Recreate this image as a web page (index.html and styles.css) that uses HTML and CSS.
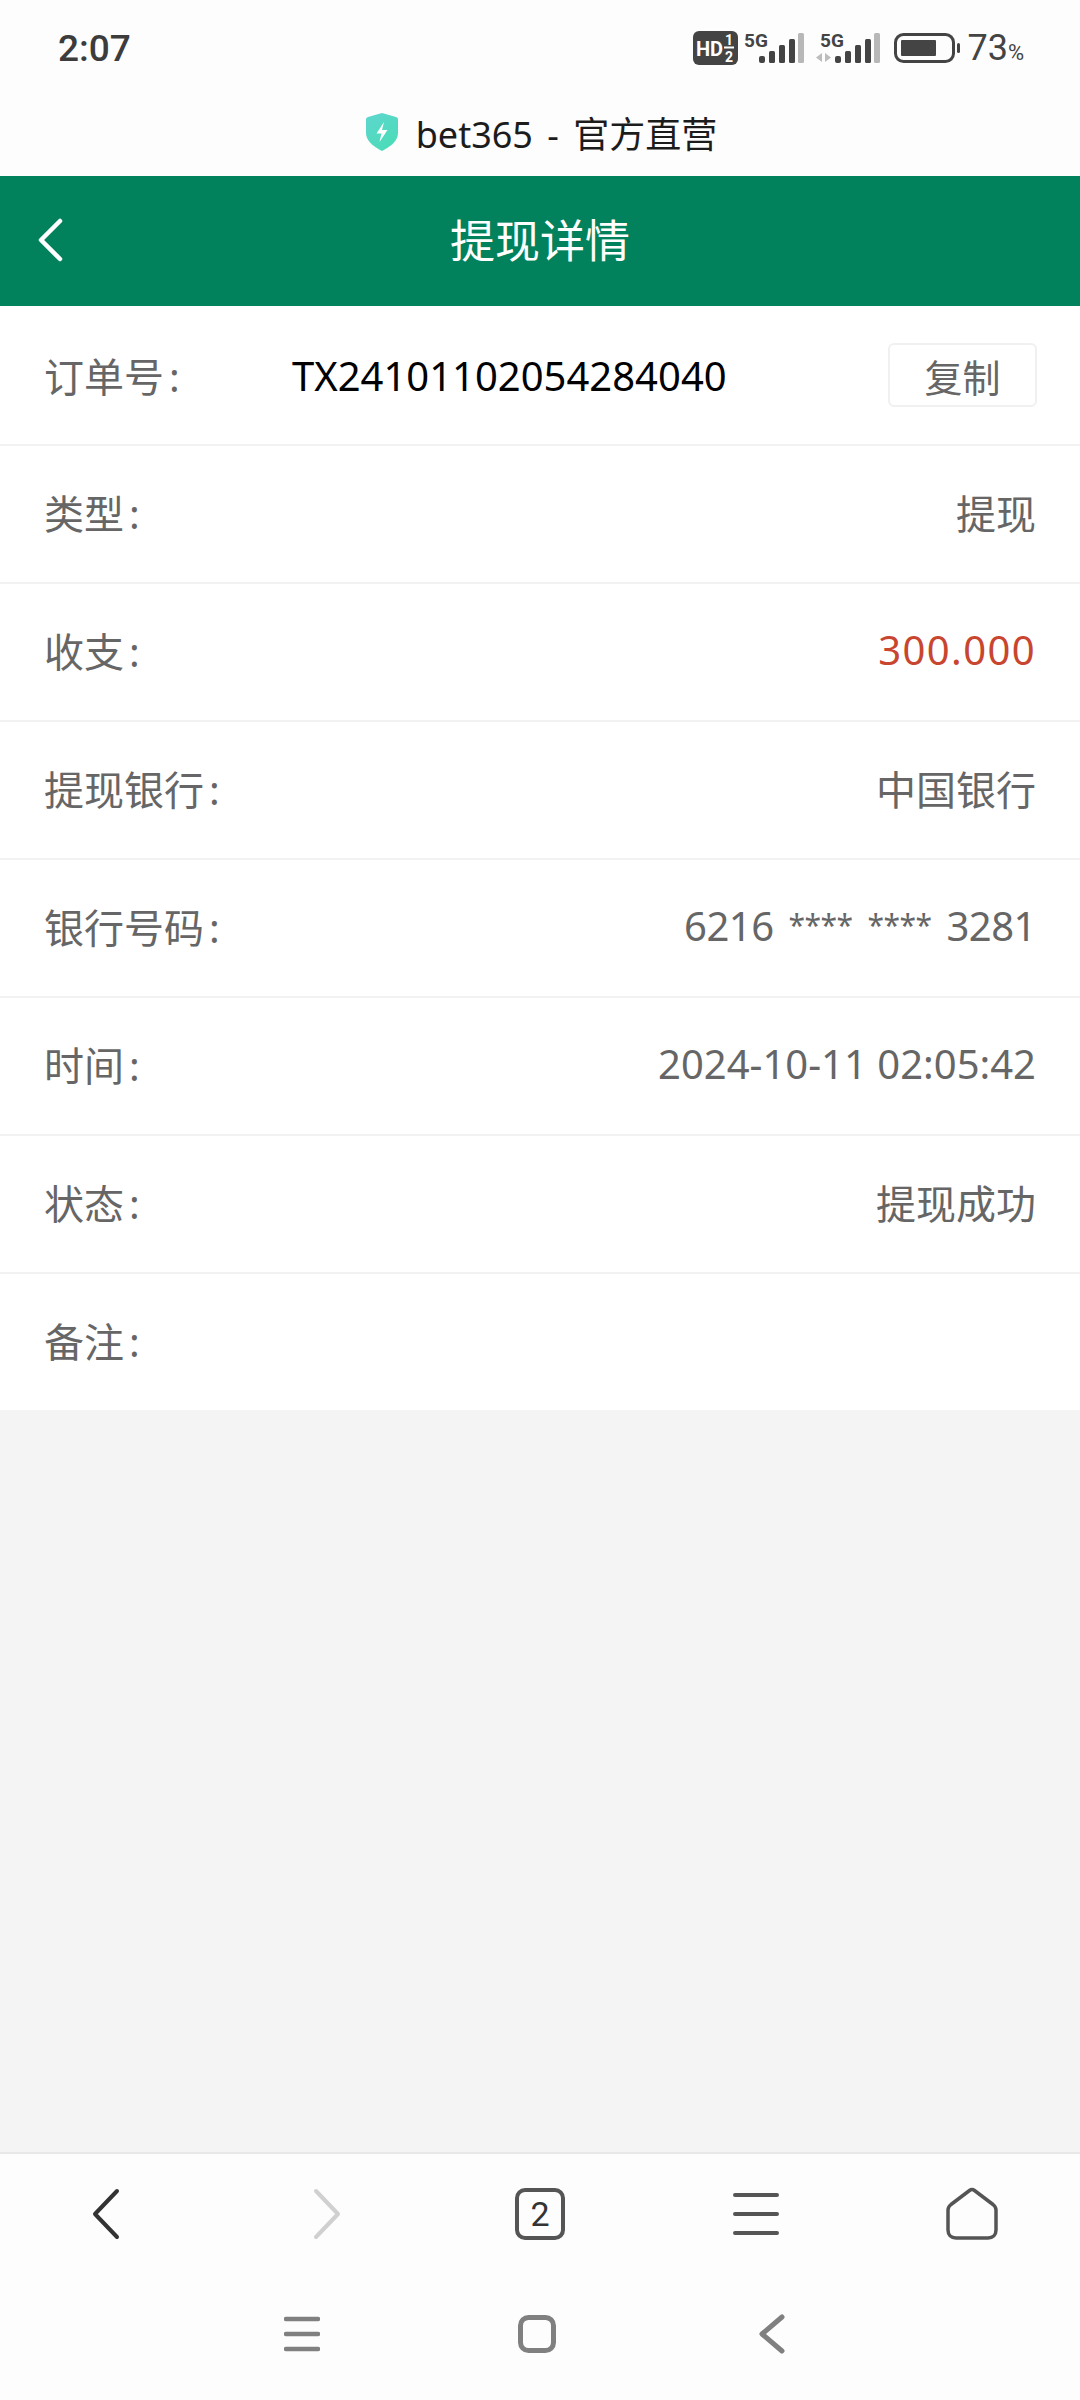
FILE: index.html
```html
<!DOCTYPE html>
<html lang="zh-CN">
<head>
    <meta charset="UTF-8">
    <meta name="viewport" content="width=device-width, initial-scale=1.0">
    <title>提现详情</title>
    <link rel="stylesheet" href="styles.css">
</head>
<body>
    <div class="phone">
        <div class="status-bar">
            <span class="clock">2:07</span>
            <div class="status-icons">
                <svg class="hd-icon" width="45" height="34" viewBox="0 0 45 34">
                    <rect width="45" height="34" rx="6" fill="#444"/>
                    <text x="3" y="25" class="hd-text">HD</text>
                    <text x="32" y="14" class="hd-frac">1</text>
                    <rect x="31" y="15.500" width="10" height="2" fill="#fff"/>
                    <text x="32" y="31" class="hd-frac">2</text>
                </svg>
                <svg class="signal signal-one" width="60" height="36" viewBox="0 0 60 36">
                    <text x="0" y="20" class="net-text">5G</text>
                    <rect x="15" y="29" width="6" height="7" rx="2" fill="#444"/>
                    <rect x="25" y="24" width="6" height="12" rx="1.500" fill="#444"/>
                    <rect x="35" y="18" width="6" height="18" rx="1.500" fill="#444"/>
                    <rect x="45" y="12" width="6" height="24" rx="1.500" fill="#444"/>
                    <rect x="54" y="6" width="6" height="30" rx="1.500" fill="#b8b8b8"/>
                </svg>
                <svg class="signal signal-two" width="64" height="36" viewBox="0 0 64 36">
                    <text x="4" y="20" class="net-text">5G</text>
                    <path d="M6 26v9l-6-4.500zM9 26v9l6-4.500z" fill="#bdbdbd"/>
                    <rect x="19" y="29" width="6" height="7" rx="2" fill="#444"/>
                    <rect x="29" y="24" width="6" height="12" rx="1.500" fill="#444"/>
                    <rect x="39" y="18" width="6" height="18" rx="1.500" fill="#444"/>
                    <rect x="49" y="12" width="6" height="24" rx="1.500" fill="#444"/>
                    <rect x="58" y="6" width="6" height="30" rx="1.500" fill="#b8b8b8"/>
                </svg>
                <svg class="battery" width="66" height="30" viewBox="0 0 66 30">
                    <rect x="1.500" y="1.500" width="58" height="27" rx="8" fill="none" stroke="#444" stroke-width="3"/>
                    <rect x="7" y="7" width="35" height="16" rx="1" fill="#444"/>
                    <rect x="63" y="10" width="3" height="10" rx="1.500" fill="#444"/>
                </svg>
                <span class="battery-level">73<small>%</small></span>
            </div>
        </div>

        <div class="address-bar">
            <svg class="shield" width="32" height="38" viewBox="0 0 32 38">
                <defs>
                    <linearGradient id="shieldFill" x1="0" y1="0" x2="0.6" y2="1">
                        <stop offset="0" stop-color="#5fd6cf"/>
                        <stop offset="1" stop-color="#4bdcb8"/>
                    </linearGradient>
                </defs>
                <path d="M16 0l14 4c1.200.4 2 1.200 2 2.500V20c0 7-6 13-16 18C6 33 0 27 0 20V6.500C0 5.200.8 4.400 2 4z" fill="url(#shieldFill)"/>
                <path d="M18 9l-7.500 11.500h5L13.500 29 21.500 17h-5.500z" fill="#fff"/>
            </svg>
            <span class="site-name">bet365 - 官方直营</span>
        </div>

        <header class="title-bar">
            <svg class="title-back" width="28" height="44" viewBox="0 0 28 44">
                <path d="M24 3L5 22l19 19" fill="none" stroke="#fff" stroke-width="4.500" stroke-linecap="round" stroke-linejoin="round"/>
            </svg>
            <h1>提现详情</h1>
        </header>

        <main class="details">
            <div class="row row-first">
                <span class="label label-order">订单号<i>:</i></span>
                <span class="order-no">TX24101102054284040</span>
                <button class="copy-btn">复制</button>
            </div>
            <div class="row">
                <span class="label">类型<i>:</i></span>
                <span class="value">提现</span>
            </div>
            <div class="row">
                <span class="label">收支<i>:</i></span>
                <span class="value value-amount">300.000</span>
            </div>
            <div class="row">
                <span class="label">提现银行<i>:</i></span>
                <span class="value">中国银行</span>
            </div>
            <div class="row">
                <span class="label">银行号码<i>:</i></span>
                <span class="value value-card">6216 <em>****</em> <em>****</em> 3281</span>
            </div>
            <div class="row">
                <span class="label">时间<i>:</i></span>
                <span class="value">2024-10-11 02:05:42</span>
            </div>
            <div class="row">
                <span class="label">状态<i>:</i></span>
                <span class="value">提现成功</span>
            </div>
            <div class="row row-last">
                <span class="label">备注<i>:</i></span>
            </div>
        </main>

        <div class="spacer"></div>

        <nav class="browser-nav">
            <svg class="nav-back" width="30" height="52" viewBox="0 0 30 52">
                <path d="M26 3L4 26l22 23" fill="none" stroke="#333" stroke-width="4" stroke-linecap="round" stroke-linejoin="round"/>
            </svg>
            <svg class="nav-forward" width="30" height="52" viewBox="0 0 30 52">
                <path d="M4 3l22 23L4 49" fill="none" stroke="#d0d0d0" stroke-width="4" stroke-linecap="round" stroke-linejoin="round"/>
            </svg>
            <div class="tab-count">2</div>
            <svg width="46" height="44" viewBox="0 0 46 44">
                <path d="M2 3h42M2 22h42M2 41h42" fill="none" stroke="#555" stroke-width="4" stroke-linecap="round"/>
            </svg>
            <svg width="52" height="54" viewBox="0 0 52 54">
                <path d="M23.500 3.500L5 17.500c-1.500 1.200-3 3-3 5.500v20c0 5 3 8 8 8h32c5 0 8-3 8-8V23c0-2.500-1.500-4.300-3-5.500L28.500 3.500c-1.700-1.300-3.300-1.300-5 0z" fill="none" stroke="#555" stroke-width="3.500" stroke-linejoin="round"/>
            </svg>
        </nav>

        <nav class="system-nav">
            <svg width="36" height="36" viewBox="0 0 36 36">
                <path d="M2 3h32M2 18h32M2 33h32" fill="none" stroke="#808080" stroke-width="4.500" stroke-linecap="round"/>
            </svg>
            <svg width="38" height="38" viewBox="0 0 38 38">
                <rect x="2.500" y="2.500" width="33" height="33" rx="8" fill="none" stroke="#808080" stroke-width="5"/>
            </svg>
            <svg width="26" height="40" viewBox="0 0 26 40">
                <path d="M23 3L3 20l20 17" fill="none" stroke="#808080" stroke-width="5" stroke-linecap="round" stroke-linejoin="round"/>
            </svg>
        </nav>
    </div>
</body>
</html>
```

FILE: styles.css
```css
* {
    box-sizing: border-box;
}
body {
    margin: 0;
    font-family: "Noto Sans", "Noto Sans CJK SC", sans-serif;
    background-color: #f4f4f4;
}
.phone {
    width: 1080px;
    height: 2400px;
    display: flex;
    flex-direction: column;
    overflow: hidden;
}

/* status bar */
.status-bar {
    height: 88px;
    padding: 8px 56px 0 58px;
    display: flex;
    align-items: center;
    justify-content: space-between;
    background-color: #fdfdfd;
}
.clock {
    font-family: Roboto, sans-serif;
    font-size: 37px;
    font-weight: 500;
    color: #3c3c3c;
}
.status-icons {
    display: flex;
    align-items: center;
}
.signal {
    margin-bottom: 6px;
}
.signal-one {
    margin-left: 6px;
}
.signal-two {
    margin-left: 12px;
}
.battery {
    margin-left: 14px;
}
.hd-text {
    font-family: Roboto, sans-serif;
    font-size: 20px;
    font-weight: 700;
    fill: #fff;
}
.hd-frac {
    font-family: Roboto, sans-serif;
    font-size: 14px;
    font-weight: 700;
    fill: #fff;
}
.net-text {
    font-family: Roboto, sans-serif;
    font-size: 19px;
    font-weight: 700;
    fill: #444;
}
.battery-level {
    margin-left: 7px;
    font-family: Roboto, sans-serif;
    font-size: 36px;
    color: #444;
}
.battery-level small {
    font-size: 22px;
}

/* address bar */
.address-bar {
    height: 88px;
    display: flex;
    align-items: center;
    justify-content: center;
    gap: 18px;
    background-color: #fdfdfd;
    padding-left: 3px;
}
.site-name {
    font-size: 36px;
    word-spacing: 5px;
    color: #1c1c1c;
}

/* green title bar */
.title-bar {
    height: 130px;
    padding-bottom: 6px;
    position: relative;
    display: flex;
    align-items: center;
    justify-content: center;
    background-color: #02825c;
}
.title-bar h1 {
    margin: 0;
    font-size: 45px;
    font-weight: 400;
    color: #fff;
}
.title-back {
    position: absolute;
    left: 36px;
    top: 42px;
}

/* detail rows */
.details {
    background-color: #fff;
}
.row {
    height: 138px;
    padding: 0 44px 5px;
    display: flex;
    align-items: center;
    justify-content: space-between;
    border-bottom: 2px solid #f2f2f2;
}
.row-first {
    height: 140px;
    padding-bottom: 0;
}
.row-last {
    height: 136px;
    border-bottom: none;
}
.label {
    font-size: 40px;
    color: #666;
}
.label i {
    margin-left: 5px;
    font-style: normal;
}
.label-order {
    width: 248px;
    flex-shrink: 0;
}
.order-no {
    flex: 1;
    font-size: 40px;
    color: #000;
}
.value {
    font-size: 40px;
    color: #666;
}
.value-amount {
    letter-spacing: 1.400px;
    color: #c8452f;
}
.value-card {
    letter-spacing: -0.500px;
    word-spacing: 5px;
}
/* masked card digits sit small and high */
.value-card em {
    font-size: 30px;
    font-style: normal;
    vertical-align: 5px;
}
.copy-btn {
    width: 149px;
    height: 64px;
    margin-right: -1px;
    padding: 0;
    font-family: inherit;
    font-size: 38px;
    color: #666;
    background-color: #fff;
    border: 2px solid #f0f0f0;
    border-radius: 6px;
}
.spacer {
    flex: 1;
    background-color: #f4f4f4;
}

/* browser toolbar */
.browser-nav {
    height: 121px;
    display: grid;
    grid-template-columns: repeat(5, 216px);
    align-items: center;
    justify-items: center;
    border-top: 2px solid #e8e8e8;
    background-color: #fdfdfd;
}
.nav-back {
    margin-right: 4px;
}
.nav-forward {
    margin-left: 6px;
}
.tab-count {
    width: 50px;
    height: 52px;
    display: flex;
    align-items: center;
    justify-content: center;
    border: 4px solid #555;
    border-radius: 10px;
    font-family: Roboto, sans-serif;
    font-size: 34px;
    color: #333;
}

/* system navigation */
.system-nav {
    height: 127px;
    padding: 0 6px 6px 0;
    display: grid;
    grid-template-columns: repeat(3, 235px);
    justify-content: center;
    align-items: center;
    justify-items: center;
    background-color: #fdfdfd;
}
```
